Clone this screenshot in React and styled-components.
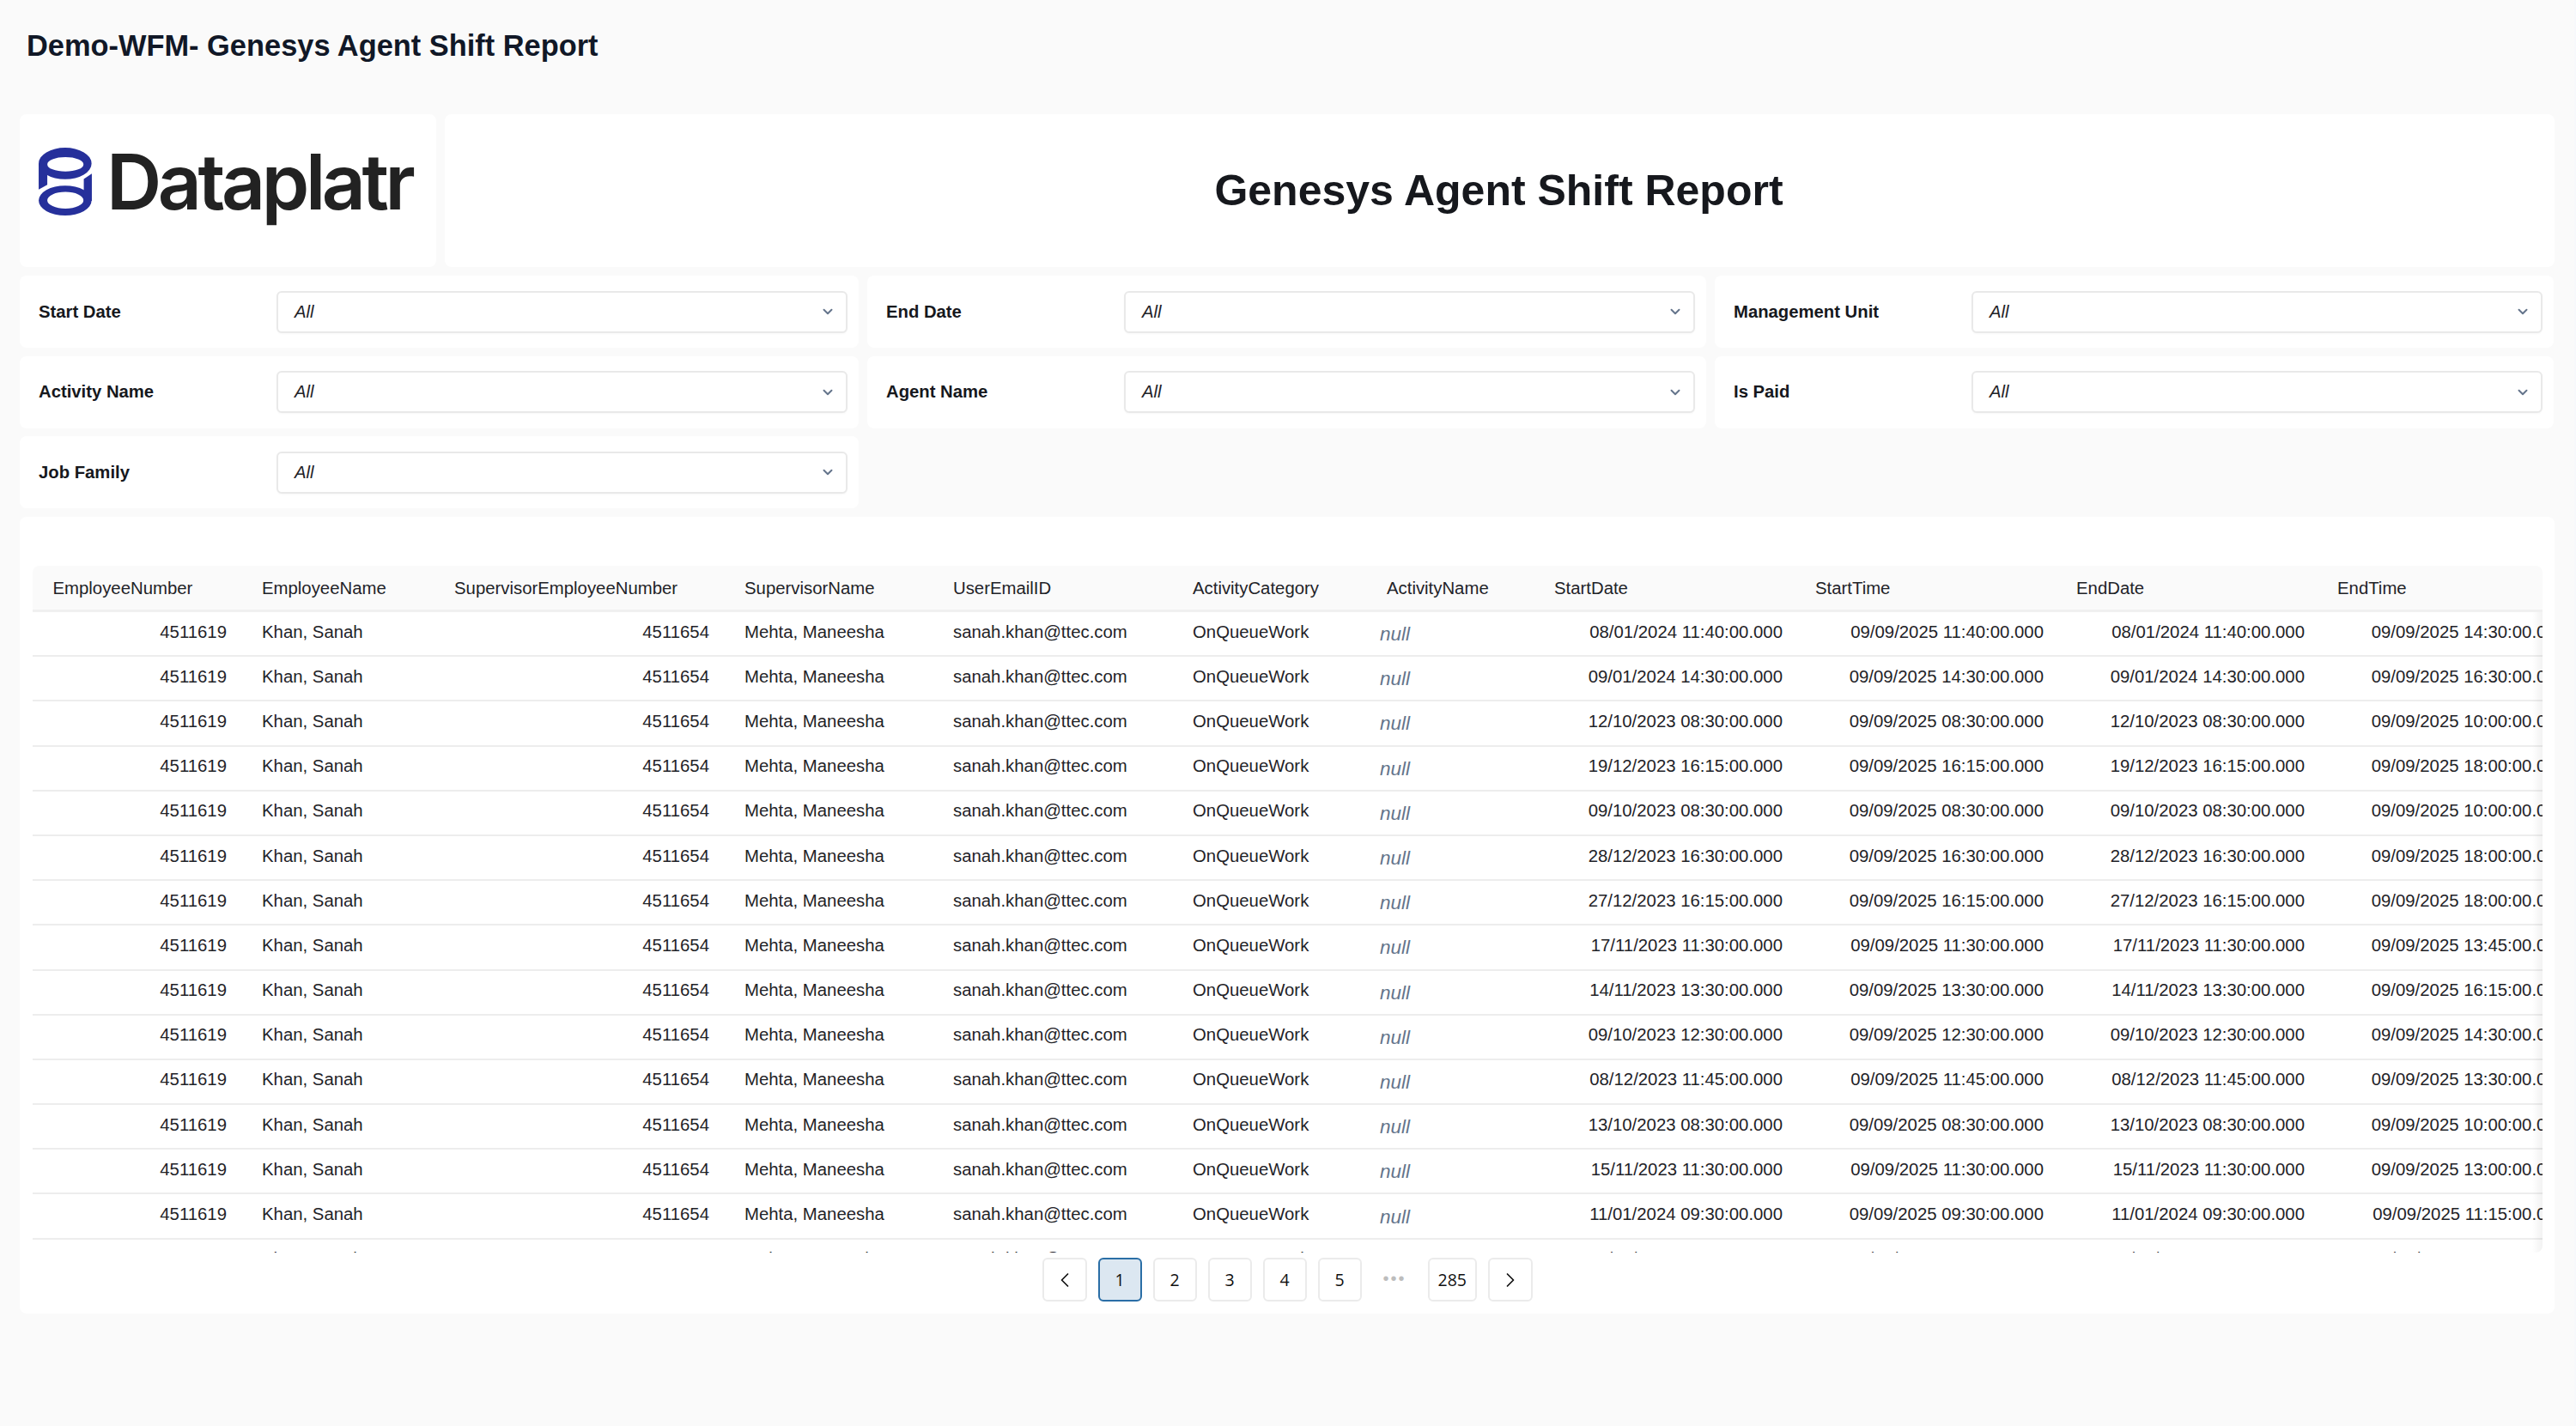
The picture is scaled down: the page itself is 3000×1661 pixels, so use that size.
import React from "react";
import styled, { createGlobalStyle } from "styled-components";
import { ChevronDown, ChevronLeft, ChevronRight } from "lucide-react";

const filters = [
  "Start Date",
  "End Date",
  "Management Unit",
  "Activity Name",
  "Agent Name",
  "Is Paid",
  "Job Family",
];

const columns = [
  { name: "EmployeeNumber", width: 243.5 },
  { name: "EmployeeName", width: 224 },
  { name: "SupervisorEmployeeNumber", width: 338 },
  { name: "SupervisorName", width: 243 },
  { name: "UserEmailID", width: 279 },
  { name: "ActivityCategory", width: 226 },
  { name: "ActivityName", width: 195 },
  { name: "StartDate", width: 304 },
  { name: "StartTime", width: 304 },
  { name: "EndDate", width: 304 },
  { name: "EndTime", width: 304 },
];

const shifts = [
  ["08/01/2024", "11:40", "14:30"],
  ["09/01/2024", "14:30", "16:30"],
  ["12/10/2023", "08:30", "10:00"],
  ["19/12/2023", "16:15", "18:00"],
  ["09/10/2023", "08:30", "10:00"],
  ["28/12/2023", "16:30", "18:00"],
  ["27/12/2023", "16:15", "18:00"],
  ["17/11/2023", "11:30", "13:45"],
  ["14/11/2023", "13:30", "16:15"],
  ["09/10/2023", "12:30", "14:30"],
  ["08/12/2023", "11:45", "13:30"],
  ["13/10/2023", "08:30", "10:00"],
  ["15/11/2023", "11:30", "13:00"],
  ["11/01/2024", "09:30", "11:15"],
  ["06/10/2023", "08:30", "10:00"],
];

function App() {
  return (
    <Page>
      <GlobalStyle />
      <PageTitle>Demo-WFM- Genesys Agent Shift Report</PageTitle>
      <Banner>
        <LogoCard>
          <LogoMark />
          <LogoText>Dataplatr</LogoText>
        </LogoCard>
        <TitleCard>
          <h1>Genesys Agent Shift Report</h1>
        </TitleCard>
      </Banner>
      <Filters>
        {filters.map((label) => (
          <FilterCard key={label}>
            <FilterLabel>{label}</FilterLabel>
            <Select>
              <em>All</em>
              <ChevronDown size={18} strokeWidth={2.6} color="#64748b" />
            </Select>
          </FilterCard>
        ))}
      </Filters>
      <TableCard>
        <TableWrap>
          <Table>
            <colgroup>
              {columns.map((col) => (
                <col key={col.name} style={{ width: col.width }} />
              ))}
            </colgroup>
            <thead>
              <tr>
                {columns.map((col) => (
                  <Head key={col.name}>{col.name}</Head>
                ))}
              </tr>
            </thead>
            <tbody>
              {shifts.map(([date, start, end], i) => (
                <tr key={i}>
                  <NumberCell>4511619</NumberCell>
                  <Cell>Khan, Sanah</Cell>
                  <NumberCell>4511654</NumberCell>
                  <Cell>Mehta, Maneesha</Cell>
                  <Cell>sanah.khan@ttec.com</Cell>
                  <Cell>OnQueueWork</Cell>
                  <NullCell>null</NullCell>
                  <Cell $right>{date} {start}:00.000</Cell>
                  <Cell $right>09/09/2025 {start}:00.000</Cell>
                  <Cell $right>{date} {start}:00.000</Cell>
                  <Cell $right>09/09/2025 {end}:00.000</Cell>
                </tr>
              ))}
            </tbody>
          </Table>
          <ScrollShadow />
        </TableWrap>
        <Pager>
          <PageButton aria-label="previous">
            <ChevronLeft size={28} strokeWidth={1.5} />
          </PageButton>
          <PageButton $active>1</PageButton>
          <PageButton>2</PageButton>
          <PageButton>3</PageButton>
          <PageButton>4</PageButton>
          <PageButton>5</PageButton>
          <Dots>•••</Dots>
          <PageButton>285</PageButton>
          <PageButton aria-label="next">
            <ChevronRight size={28} strokeWidth={1.5} />
          </PageButton>
        </Pager>
      </TableCard>
    </Page>
  );
}

function LogoMark() {
  return (
    <svg width="62" height="79" viewBox="75 97 185 236">
      <g fill="#26309b">
        <path
          fillRule="evenodd"
          d="M75 281a92 52 0 1 0 184 0a92 52 0 1 0 -184 0zM105 280a63 29 0 1 1 126 0a63 29 0 1 1 -126 0z"
        />
        <polygon points="232,206 260,187 260,282 232,282" />
        <path
          fillRule="evenodd"
          d="M75 152a92 55 0 1 1 184 0a92 55 0 1 1 -184 0zM105 155a63 25 0 1 0 126 0a63 25 0 1 0 -126 0z"
        />
        <polygon points="75,152 105,152 105,226 75,243" />
      </g>
    </svg>
  );
}

const GlobalStyle = createGlobalStyle`
  html, body {
    margin: 0;
    background: #fafafa;
  }
  * {
    box-sizing: border-box;
  }
`;

const Page = styled.div`
  min-height: 100vh;
  padding: 0 23px 0 23px;
  border-right: 2px solid #f7f8fb;
  font-family: "Liberation Sans", Arial, sans-serif;
  color: #1f2328;
`;

const PageTitle = styled.div`
  height: 133px;
  padding: 33px 0 0 8px;
  font-size: 34.4px;
  line-height: 40px;
  font-weight: 700;
  color: #111827;
`;

const Banner = styled.div`
  display: grid;
  grid-template-columns: 485px 1fr;
  gap: 10px;
  height: 178px;
  margin-bottom: 10px;
`;

const LogoCard = styled.div`
  display: flex;
  align-items: flex-start;
  gap: 17px;
  padding: 39px 0 0 22px;
  background: #fff;
  border-radius: 8px;
`;

const LogoText = styled.span`
  font-family: Inter, sans-serif;
  font-size: 89px;
  line-height: 80px;
  font-weight: 600;
  letter-spacing: -4.4px;
  color: #222;
`;

const TitleCard = styled.div`
  display: flex;
  align-items: center;
  justify-content: center;
  padding-right: 2px;
  background: #fff;
  border-radius: 8px;

  h1 {
    margin: 0;
    font-size: 50px;
    font-weight: 700;
    color: #16181d;
  }
`;

const Filters = styled.div`
  display: grid;
  grid-template-columns: repeat(3, 977px);
  grid-auto-rows: 84px;
  gap: 9.5px 10px;
  margin-bottom: 10px;
`;

const FilterCard = styled.div`
  display: grid;
  grid-template-columns: 277px 1fr;
  align-items: center;
  padding: 0 13px 0 22px;
  background: #fff;
  border-radius: 8px;
`;

const FilterLabel = styled.div`
  font-size: 20.3px;
  font-weight: 700;
  color: #16181d;
`;

const Select = styled.div`
  display: flex;
  align-items: center;
  justify-content: space-between;
  height: 49px;
  padding: 0 12px 0 19px;
  background: #fff;
  border: 2px solid #e9e9e9;
  border-radius: 6px;
  font-size: 20.3px;
  color: #1f2328;
  box-shadow: 0 1px 2px rgba(0, 0, 0, 0.03);
`;

const TableCard = styled.div`
  height: 928px;
  padding: 57px 14px 0 14.5px;
  background: #fff;
  border-radius: 8px;
`;

const TableWrap = styled.div`
  position: relative;
  height: 800px;
  overflow: hidden;
  border-radius: 8px;
`;

const Table = styled.table`
  width: 2964px;
  table-layout: fixed;
  border-collapse: separate;
  border-spacing: 0;
  font-size: 20.35px;
`;

const Head = styled.th`
  height: 54px;
  padding: 2px 16px 0 24px;
  background: #fafafa;
  border-bottom: 3px solid #f0f0f0;
  text-align: left;
  font-weight: 400;
  color: #1f2328;
  white-space: nowrap;
`;

const Cell = styled.td`
  height: 52.2px;
  padding: 0 14px 4px 24px;
  border-bottom: 2px solid #ededed;
  text-align: ${(p) => (p.$right ? "right" : "left")};
  white-space: nowrap;
`;

const NumberCell = styled(Cell)`
  padding-right: 17px;
  text-align: right;
`;

const NullCell = styled(Cell)`
  padding: 2px 0 0 16px;
  font-size: 22.5px;
  font-style: italic;
  color: #64748b;
`;

const ScrollShadow = styled.div`
  position: absolute;
  top: 54px;
  right: 0;
  bottom: 0;
  width: 12px;
  background: linear-gradient(to right, rgba(0, 0, 0, 0), rgba(0, 0, 0, 0.05));
`;

const Pager = styled.div`
  display: flex;
  justify-content: center;
  gap: 13px;
  margin-top: 6px;
`;

const PageButton = styled.div`
  display: flex;
  align-items: center;
  justify-content: center;
  min-width: 51px;
  height: 51px;
  padding: 0 10px;
  background: ${(p) => (p.$active ? "#dce7f1" : "#fff")};
  border: 2px solid ${(p) => (p.$active ? "#2a6ea6" : "#ebebeb")};
  border-radius: 6px;
  font-family: "Open Sans", sans-serif;
  font-size: 19.5px;
  color: #111;
`;

const Dots = styled.div`
  display: flex;
  align-items: center;
  justify-content: center;
  width: 51px;
  height: 51px;
  padding-bottom: 2px;
  font-size: 20px;
  letter-spacing: 2px;
  color: #bdbdbd;
`;

export default App;
